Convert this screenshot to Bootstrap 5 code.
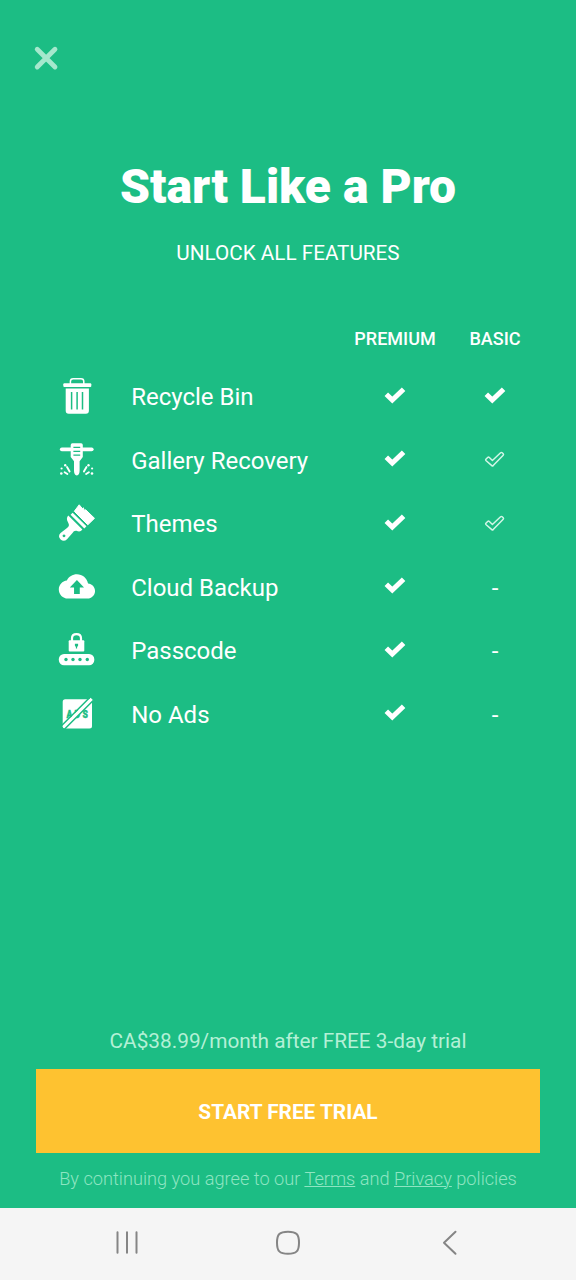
<!DOCTYPE html>
<html lang="en">
<head>
<meta charset="utf-8">
<meta name="viewport" content="width=device-width, initial-scale=1">
<title>Start Like a Pro</title>
<link href="https://cdn.jsdelivr.net/npm/bootstrap@5.3.0/dist/css/bootstrap.min.css" rel="stylesheet">
<style>
  body { font-family: Roboto, "Liberation Sans", sans-serif; background: #1cbd84; color: #fff; }
  .screen { width: 576px; height: 1280px; overflow: hidden; }
  .screen svg { display: block; flex: none; }
  .top-area { padding: 40px 28px 0; height: 158px; }
  .close-btn { width: 36px; height: 36px; line-height: 0; }
  .headline { font-size: 48px; font-weight: 900; line-height: 58px; }
  .subtitle { font-size: 20.7px; line-height: 26px; margin-top: 24px; }
  .features { margin-top: 60px; padding: 0 31px 0 47px; }
  .feature-row { height: 63.5px; font-size: 24px; }
  .feature-head { height: 39.3px; font-size: 18px; font-weight: 500; line-height: 26px; }
  .col-icon { width: 60px; flex: none; }
  .col-name { width: 238px; padding: 2px 0 0 24.2px; flex: none; line-height: 31.6px; }
  .col-tier { width: 100px; flex: none; display: flex; justify-content: center; }
  .col-tier svg { margin-bottom: 4.4px; }
  .price { font-size: 20.8px; line-height: 28px; color: #b4f0d6; }
  .cta { height: 84px; margin: 14px 36px 0; padding-top: 9px; font-size: 20.8px; font-weight: 700; background: #fec230; color: #fff; }
  .cta:hover { background: #fec230; color: #fff; }
  .legal { font-size: 18.2px; font-weight: 300; line-height: 24px; margin: 14px 0 17px; color: #8ee5c2; }
  .legal a { color: inherit; text-decoration-thickness: 1px; }
  .system-bar { height: 72px; background: #f5f5f5; }
</style>
</head>
<body>
<svg width="0" height="0" class="d-none" aria-hidden="true">
  <symbol id="check" viewBox="0 0 24 20"><path d="M3.300 9.200 9.300 15.100 20.600 4.200" fill="none" stroke="#fff" stroke-width="5"/></symbol>
  <symbol id="check-outline" viewBox="0 0 24 20"><path transform="translate(0 .7)" d="M2.900 10.600 4.900 8.600Q5.500 8.100 6.100 8.600L9.400 11.800 17.600 4.100Q18.400 3.400 19.200 4.100L20.200 5.100Q20.900 5.900 20.200 6.600L10.200 16.900Q9.500 17.500 8.800 16.900L2.900 11.800Q2.400 11.200 2.900 10.600Z" fill="none" stroke="#d2f6e7" stroke-width="1.500" stroke-linejoin="round"/></symbol>
</svg>
<main class="screen d-flex flex-column">
  <header class="top-area">
    <button class="close-btn btn p-0 border-0" aria-label="Close">
      <svg width="36" height="36" viewBox="0 0 36 36"><path d="M9.200 9.200 27 27M27 9.200 9.200 27" stroke="#a5e8cd" stroke-width="4.800" stroke-linecap="round"/></svg>
    </button>
  </header>
  <h1 class="headline text-center m-0">Start Like a Pro</h1>
  <div class="subtitle text-center">UNLOCK ALL FEATURES</div>

  <section class="features">
    <div class="feature-head d-flex">
      <div class="col-icon"></div><div class="col-name"></div>
      <div class="col-tier">PREMIUM</div><div class="col-tier">BASIC</div>
    </div>
    <div class="feature-row d-flex align-items-center">
      <svg class="col-icon" height="60" viewBox="-3 0 60 60">
        <path d="M20.400 17v-2.600q0-2.600 2.800-2.600h7.800q2.800 0 2.800 2.600V17" fill="none" stroke="#fff" stroke-width="1.500"/>
        <rect x="13.300" y="16.300" width="28" height="3.800" rx="1" fill="#fff"/>
        <path d="M15.700 21.600h23.200v22.200q0 3-3 3H18.700q-3 0-3-3z" fill="#fff"/>
        <path d="M21.600 25v17.500M27.100 25v17.500M32.500 25v17.500" stroke="#1cbd84" stroke-width="1.500"/>
      </svg>
      <div class="col-name">Recycle Bin</div>
      <div class="col-tier"><svg width="24" height="20"><use href="#check"/></svg></div>
      <div class="col-tier"><svg width="24" height="20"><use href="#check"/></svg></div>
    </div>
    <div class="feature-row d-flex align-items-center">
      <svg class="col-icon" height="60" viewBox="-3 0 60 60">
        <path d="M11.800 18.300H41.700" stroke="#fff" stroke-width="3.800" stroke-linecap="round"/>
        <path d="M20.700 14q0-1.700 1.700-1.700h8.700q1.700 0 1.700 1.700v12l-3.200 4.200v9.500q0 4-2.800 4.700-2.800-.7-2.800-4.700V30.200L20.700 26z" fill="#fff"/>
        <path d="M23.400 16.400h6.800M23.400 20.300h6.800M23.400 24.200h6.800" stroke="#1cbd84" stroke-width="1.300"/>
        <path d="m17 36 2.600 4.500M14.600 41.200l2.800 1.800M36.500 36l-2.600 4.500M38.900 41.200l-2.800 1.800" stroke="#fff" stroke-width="1.900" stroke-linecap="round"/>
        <g fill="#fff"><circle cx="15.200" cy="34.300" r="1.200"/><circle cx="11.600" cy="37.500" r="1.100"/><circle cx="11.300" cy="42.500" r="1.300"/><circle cx="38.500" cy="34.300" r="1.200"/><circle cx="42.100" cy="37.500" r="1.100"/><circle cx="42" cy="42.500" r="1.300"/></g>
      </svg>
      <div class="col-name">Gallery Recovery</div>
      <div class="col-tier"><svg width="24" height="20"><use href="#check"/></svg></div>
      <div class="col-tier"><svg width="24" height="20"><use href="#check-outline"/></svg></div>
    </div>
    <div class="feature-row d-flex align-items-center">
      <svg class="col-icon" height="60" viewBox="-3 0 60 60">
        <path d="M24.300 17.300 29.200 10.800l3.200 3.800 1-.8.700 2.400 1.600-.4L44.500 24.300 37.800 30.800z" fill="#fff" stroke="#fff" stroke-width="1" stroke-linejoin="round"/>
        <path d="m21.600 19.700 13.800 13.700" stroke="#fff" stroke-width="3"/>
        <path fill-rule="evenodd" d="m18.300 21.600 14.100 14q-2.300 3.200-6 1.100-2.700-.3-3.900 2.300L17 45.200q-3.200 3-6.400.2-3.200-3.300 0-6.500l6.100-4.700q3.600-2 1.400-5.600-2.500-4 .2-7zM14 40.400a1.400 1.400 0 1 0 .01 0z" fill="#fff"/>
      </svg>
      <div class="col-name">Themes</div>
      <div class="col-tier"><svg width="24" height="20"><use href="#check"/></svg></div>
      <div class="col-tier"><svg width="24" height="20"><use href="#check-outline"/></svg></div>
    </div>
    <div class="feature-row d-flex align-items-center">
      <svg class="col-icon" height="60" viewBox="-3 0 60 60">
        <path transform="translate(8.800 10.300) scale(1.510)" d="M19.350 10.040C18.670 6.590 15.640 4 12 4 9.110 4 6.600 5.640 5.350 8.040 2.340 8.360 0 10.910 0 14c0 3.310 2.690 6 6 6h13c2.760 0 5-2.240 5-5 0-2.640-2.050-4.780-4.650-4.960zM13.900 12.700v4.300h-3.800v-4.300H7.300L12 7.800l4.700 4.900z" fill-rule="evenodd" fill="#fff"/>
      </svg>
      <div class="col-name">Cloud Backup</div>
      <div class="col-tier"><svg width="24" height="20"><use href="#check"/></svg></div>
      <div class="col-tier">-</div>
    </div>
    <div class="feature-row d-flex align-items-center">
      <svg class="col-icon" height="60" viewBox="-3 0 60 60">
        <path d="M22 20.500v-3.200q0-4.200 4.500-4.200t4.500 4.200v3.200" fill="none" stroke="#fff" stroke-width="2.200"/>
        <rect x="18.700" y="19.200" width="15.600" height="11.200" rx="1" fill="#fff"/>
        <path d="M24.900 22.800h3.200v2l-1 1.300v1.500h-1.200v-1.500l-1-1.300z" fill="#1cbd84"/>
        <rect x="8.800" y="33" width="35.500" height="11.200" rx="5.200" fill="#fff"/>
        <g fill="#1cbd84"><circle cx="16" cy="38.500" r="1.700"/><circle cx="23" cy="38.500" r="1.700"/><circle cx="30" cy="38.500" r="1.700"/><circle cx="37.300" cy="38.500" r="1.700"/></g>
      </svg>
      <div class="col-name">Passcode</div>
      <div class="col-tier"><svg width="24" height="20"><use href="#check"/></svg></div>
      <div class="col-tier">-</div>
    </div>
    <div class="feature-row d-flex align-items-center">
      <svg class="col-icon" height="60" viewBox="-3 0 60 60">
        <rect x="12.700" y="14.300" width="29.300" height="29.300" rx="2.500" fill="#fff"/>
        <text transform="scale(.82 1)" x="20.200 30 39.600" y="33.300" font-family="Roboto, sans-serif" font-size="10.500" font-weight="900" fill="#1cbd84" stroke="#1cbd84" stroke-width=".4">ADS</text>
        <path d="M13.700 42.500 42 14.200" stroke="#fff" stroke-width="4"/>
        <path d="M11.700 40.500 39.500 12.700M14.200 44.500 43.500 15.200" stroke="#1cbd84" stroke-width="1.500"/>
      </svg>
      <div class="col-name">No Ads</div>
      <div class="col-tier"><svg width="24" height="20"><use href="#check"/></svg></div>
      <div class="col-tier">-</div>
    </div>
  </section>

  <section class="mt-auto d-flex flex-column text-center">
    <div class="price">CA$38.99/month after FREE 3-day trial</div>
    <button class="cta btn rounded-0 border-0">START FREE TRIAL</button>
    <div class="legal">By continuing you agree to our <a href="#">Terms</a> and <a href="#">Privacy</a> policies</div>
  </section>

  <nav class="system-bar d-flex justify-content-center" aria-label="System">
    <svg width="576" height="72" viewBox="0 0 576 72" fill="none" stroke="#858585" stroke-width="2" stroke-linecap="round">
      <path d="M117.500 24.300v20.500M127 24.300v20.500M136.500 24.300v20.500"/>
      <path d="M288 23.700c8.500 0 11 2.500 11 11s-2.500 11-11 11-11-2.500-11-11 2.500-11 11-11z"/>
      <path d="M455.500 23.700 444 34.700l11.500 11" stroke-linejoin="round"/>
    </svg>
  </nav>
</main>
<script src="https://cdn.jsdelivr.net/npm/bootstrap@5.3.0/dist/js/bootstrap.bundle.min.js"></script>
</body>
</html>
